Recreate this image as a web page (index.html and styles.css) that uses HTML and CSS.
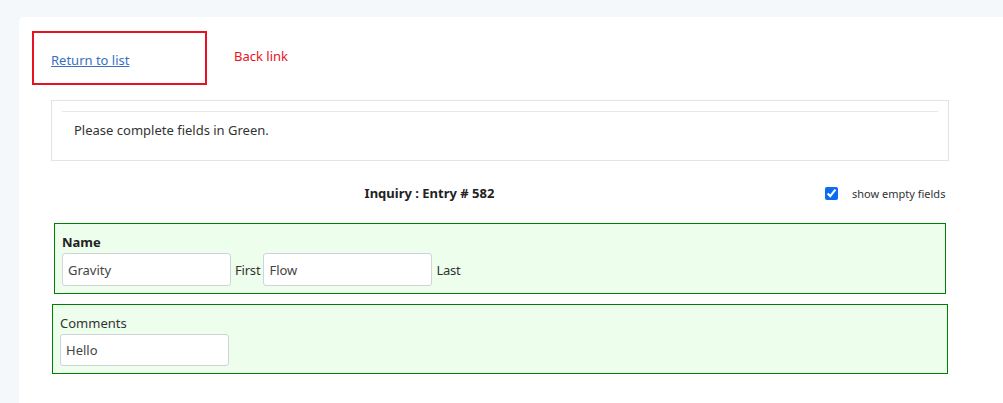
FILE: index.html
```html
<!DOCTYPE html>
<html>
<head>
<meta charset="utf-8">
<link rel="stylesheet" href="styles.css">
</head>
<body>
<div class="page">
  <div class="panel">
    <div class="top-row">
      <div class="back-box"><a href="#" class="back-link">Return to list</a></div>
      <span class="note">Back link</span>
    </div>
    <div class="content">
      <div class="info">
        <div class="info-rule"></div>
        <p class="info-text">Please complete fields in Green.</p>
      </div>
      <div class="heading-row">
        <div class="title">Inquiry : Entry # 582</div>
        <label class="toggle"><input type="checkbox" checked class="check"><span>show empty fields</span></label>
      </div>
      <div class="field field-name">
        <div class="field-label bold">Name</div>
        <div class="inputs">
          <input class="text" type="text" value="Gravity"><span class="sub">First</span>
          <input class="text" type="text" value="Flow"><span class="sub">Last</span>
        </div>
      </div>
      <div class="field field-comments">
        <div class="field-label">Comments</div>
        <div class="inputs">
          <input class="text text-c" type="text" value="Hello">
        </div>
      </div>
    </div>
  </div>
</div>
</body>
</html>
```

FILE: styles.css
```css
* { box-sizing: border-box; }
html, body { margin: 0; padding: 0; }
body {
  background: #f5f8fb;
  font-family: "Noto Sans", "Open Sans", sans-serif;
  font-size: 13px;
  color: #333;
  width: 1003px;
  height: 403px;
  overflow: hidden;
}
.page { padding: 17px 0 0 19px; height: 403px; }
.panel {
  background: #fff;
  border-top-left-radius: 5px;
  height: 100%;
  padding: 14px 0 0 13px;
}
.top-row { display: flex; align-items: flex-start; }
.back-box {
  width: 175px;
  height: 54px;
  border: 2px solid #e81123;
  padding: 18px 0 0 17px;
  line-height: 18px;
}
.back-link { color: #3a6fc2; text-decoration: underline; }
.note { color: #e81123; margin: 16px 0 0 27px; line-height: 18px; }
.content { padding: 15px 0 0 19px; width: 917px; }
.info {
  border: 1px solid #e3e3e3;
  height: 61px;
  padding: 10px 10px 0 10px;
}
.info-rule { border-top: 1px solid #e6e6e6; }
.info-text { margin: 9px 0 0 12px; line-height: 18px; }
.heading-row {
  display: flex;
  align-items: center;
  height: 22px;
  margin-top: 21px;
}
.title {
  font-weight: bold;
  width: 757px;
  text-align: center;
  color: #222;
}
.toggle { display: flex; align-items: center; font-size: 11px; margin-left: 17px; }
.check { margin: 0 14px 0 0; width: 13px; height: 13px; accent-color: #0b6cf3; }
.field {
  background: #edfeed;
  border: 1px solid #008000;
}
.field-name { margin: 19px 3px 0 3px; height: 71px; padding: 9px 0 0 7px; }
.field-comments { margin: 10px 1px 0 1px; height: 70px; padding: 9px 0 0 7px; }
.field-label { line-height: 18px; }
.bold { font-weight: bold; color: #222; }
.inputs { display: flex; align-items: center; margin-top: 2px; }
.text {
  width: 169px;
  height: 33px;
  border: 1px solid #ced4da;
  border-radius: 3px;
  font: inherit;
  color: #444;
  padding: 0 5px;
  background: #fff;
}
.text-c { height: 32px; }
.sub { margin: 0 3px 0 4px; letter-spacing: -0.2px; }
```
